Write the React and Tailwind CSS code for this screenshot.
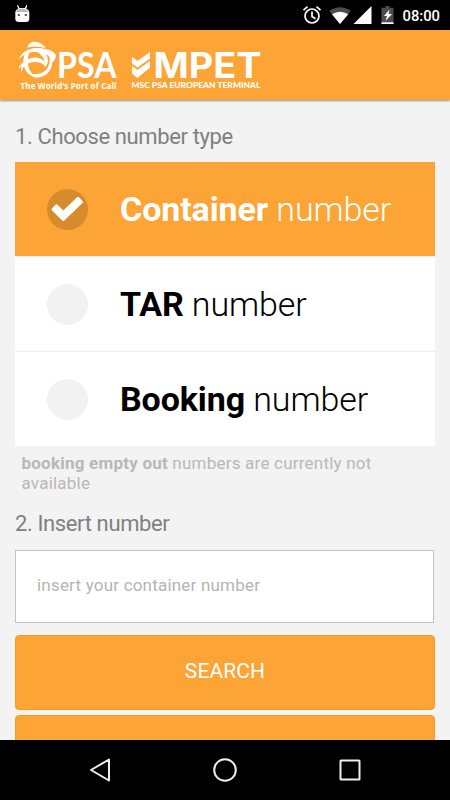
import { clsx } from "clsx";

const OPTIONS = [
  { name: "Container", selected: true },
  { name: "TAR", selected: false },
  { name: "Booking", selected: false },
];

function StatusBar() {
  return (
    <div className="flex h-[30px] shrink-0 bg-black">
      <svg width="450" height="30" viewBox="0 0 450 30">
        <path d="M18 5l1.500 3h5.400l1.500-3 .9.500-1 3.200q3 1 3 4v6.300q0 3-3.500 3h-7q-3.500 0-3.500-3v-6.300q0-3 3-4L17 5.500z" fill="#fff" />
        <path d="M16 12q.8-3.500 6.200-3.500T28.500 12z" fill="#bbb" />
        <path d="M17.800 14h2v2h-2zM24.800 14h2v2h-2z" fill="#555" />
        <g fill="none" stroke="#fff" strokeWidth="1.700">
          <circle cx="312" cy="16" r="7" />
          <path d="M303.500 10.200l4-3.500M320.500 10.200l-4-3.500M312 11.500v5l3.500 2.200" />
        </g>
        <path d="M329.300 11q11-7.500 21.500 0L340 24.200z" fill="#4d4d4d" />
        <path d="M332 14.200q8-5 16.200 0L340 24z" fill="#fff" />
        <path d="M371.500 6v18h-18z" fill="#fff" />
        <path d="M385.500 6h4v1.700h4V24h-12V7.700h4z" fill="#4d4d4d" />
        <path d="M381.500 22.300h12V24h-12z" fill="#fff" />
        <path d="M389.500 9.500l-5.500 6.500h3l-1.500 5 6.500-7h-3.500z" fill="#fff" />
        <text x="402.500" y="21" fontSize="15.500" textLength="37.500" lengthAdjust="spacingAndGlyphs" fontWeight="500" className="fill-white font-[Roboto,sans-serif]">
          08:00
        </text>
      </svg>
    </div>
  );
}

function PsaLogo() {
  return (
    <svg width="104" height="60" viewBox="14 36 104 60" fill="#fff" className="overflow-visible">
      <g transform="translate(16 38) scale(.3333)">
        {/* globe with the swooshes around it */}
        <path d="M34 29C38 16 46 11 57 11C73 13 84 21 89 31C70 25 51 23 34 29Z" />
        <path d="M7 66C17 42 36 31 61 30C87 30 114 37 119 51C121 59 116 69 106 75C107 65 102 54 87 48C61 37 29 39 7 66Z" />
        <path d="M27 47C17 69 22 96 42 111C49 117 58 119 65 119C91 116 108 99 109 72L101 56C102 78 97 90 86 99C76 107 60 110 50 108C36 96 31 70 40 42Z" />
        <path d="M6 93C18 68 43 57 64 59C79 62 89 70 89 86C72 68 44 69 28 82C20 89 18 96 17 103C14 96 13 89 19 82Z" />
        <path d="M64 42C76 49 83 58 86 73L88 88C99 76 98 56 86 45Z" />
      </g>
      <text x="57" y="78" fontSize="36.500" textLength="59.500" lengthAdjust="spacingAndGlyphs" fontWeight="700" className="font-[Lato,sans-serif]">
        PSA
      </text>
      <text x="20.500" y="88.500" fontSize="8" textLength="96" fontWeight="700" className="font-['Open_Sans',sans-serif]">
        The World’s Port of Call
      </text>
    </svg>
  );
}

function MpetLogo() {
  return (
    <svg width="132" height="60" viewBox="130 36 132 60" fill="#fff" className="overflow-visible">
      <path d="M132 57l5.500 4L150 52v6.500L137.500 67.500 132 63.500zM132 66l5.500 4L150 61v6.500L137.500 78 132 73.500z" />
      <text x="153.500" y="77.500" fontSize="35" textLength="108" lengthAdjust="spacingAndGlyphs" fontWeight="700" className="font-[Inter,sans-serif]">
        MPET
      </text>
      <text x="131.500" y="88" fontSize="7.200" textLength="129" lengthAdjust="spacingAndGlyphs" fontWeight="900" className="font-[Lato,sans-serif]">
        MSC PSA EUROPEAN TERMINAL
      </text>
    </svg>
  );
}

function Option({ name, selected }) {
  return (
    <button
      type="button"
      className={clsx(
        "flex items-center pl-8",
        selected
          ? "h-[94px] bg-[#fca435] text-white"
          : "h-[95px] border-t border-[#f0f0f0] bg-white text-black"
      )}
    >
      <span
        className={clsx(
          "flex size-[41px] items-center justify-center rounded-full",
          selected ? "bg-[#d68c2d]" : "bg-[#f2f2f2]"
        )}
      >
        {selected && (
          <svg width="33" height="26" viewBox="0 0 33 26" fill="#fff">
            <path d="M1 12.500l3.500-3.700q1-.9 2 0L12.300 14.500 26 1.300q1-.9 2 0L31.500 5q1 1 0 2L13.300 24.500q-1 1-2 0L1 14.500q-1-1 0-2z" />
          </svg>
        )}
      </span>
      <span className="ml-8 text-[34px] leading-10 font-light tracking-[-0.1px]">
        <b className="font-bold">{name}</b> number
      </span>
    </button>
  );
}

function NavBar() {
  return (
    <nav className="flex h-[60px] shrink-0 items-center justify-center bg-black">
      <svg width="300" height="60" viewBox="75 0 300 60" fill="none" stroke="#eee" strokeWidth="2" strokeLinejoin="round">
        <path d="M109 19.500v21L91 30z" />
        <circle cx="225" cy="30" r="10.800" />
        <rect x="340.500" y="20.500" width="19" height="19" rx=".5" />
      </svg>
    </nav>
  );
}

export default function App() {
  return (
    <div className="flex h-[800px] w-[450px] flex-col overflow-hidden bg-[#f3f3f3] font-[Roboto,sans-serif]">
      <StatusBar />
      <header className="flex h-[70px] shrink-0 items-start gap-3 bg-[#fca435] pt-1.5 pl-3.5 shadow-[0_1px_2px_rgba(0,0,0,0.4)]">
        <PsaLogo />
        <MpetLogo />
      </header>

      <main className="flex min-h-0 flex-1 flex-col overflow-hidden px-[15px]">
        <h2 className="mt-[23px] h-[39px] shrink-0 text-[22px] leading-7 font-normal tracking-[-0.38px] text-[#808080]">
          1. Choose number type
        </h2>
        <div className="flex shrink-0 flex-col">
          {OPTIONS.map((o) => (
            <Option key={o.name} {...o} />
          ))}
        </div>
        <p className="mt-[7px] shrink-0 pl-[6.5px] text-[17px] leading-5 tracking-[0.22px] text-[#b8b8b8]">
          <b className="font-bold">booking empty out</b> numbers are currently not
          <br />
          available
        </p>
        <h2 className="mt-[17px] shrink-0 text-[22px] leading-7 font-normal tracking-[-0.38px] text-[#808080]">
          2. Insert number
        </h2>
        <input
          className="mt-3 mr-px h-[73px] shrink-0 border border-[#c4c4c4] bg-white px-[21px] pb-[3px] text-[17px] tracking-[0.2px] placeholder:text-[#b4b4b4]"
          placeholder="insert your container number"
        />
        <button
          type="button"
          className="mt-3 h-[75px] shrink-0 rounded border border-[#f89c1c] bg-[#fca435] pb-0.5 text-[21px] tracking-[0.1px] text-white"
        >
          SEARCH
        </button>
        <button
          type="button"
          aria-label="More"
          className="mt-[5px] h-[75px] shrink-0 rounded border border-[#f89c1c] bg-[#fca435]"
        />
      </main>
      <NavBar />
    </div>
  );
}
